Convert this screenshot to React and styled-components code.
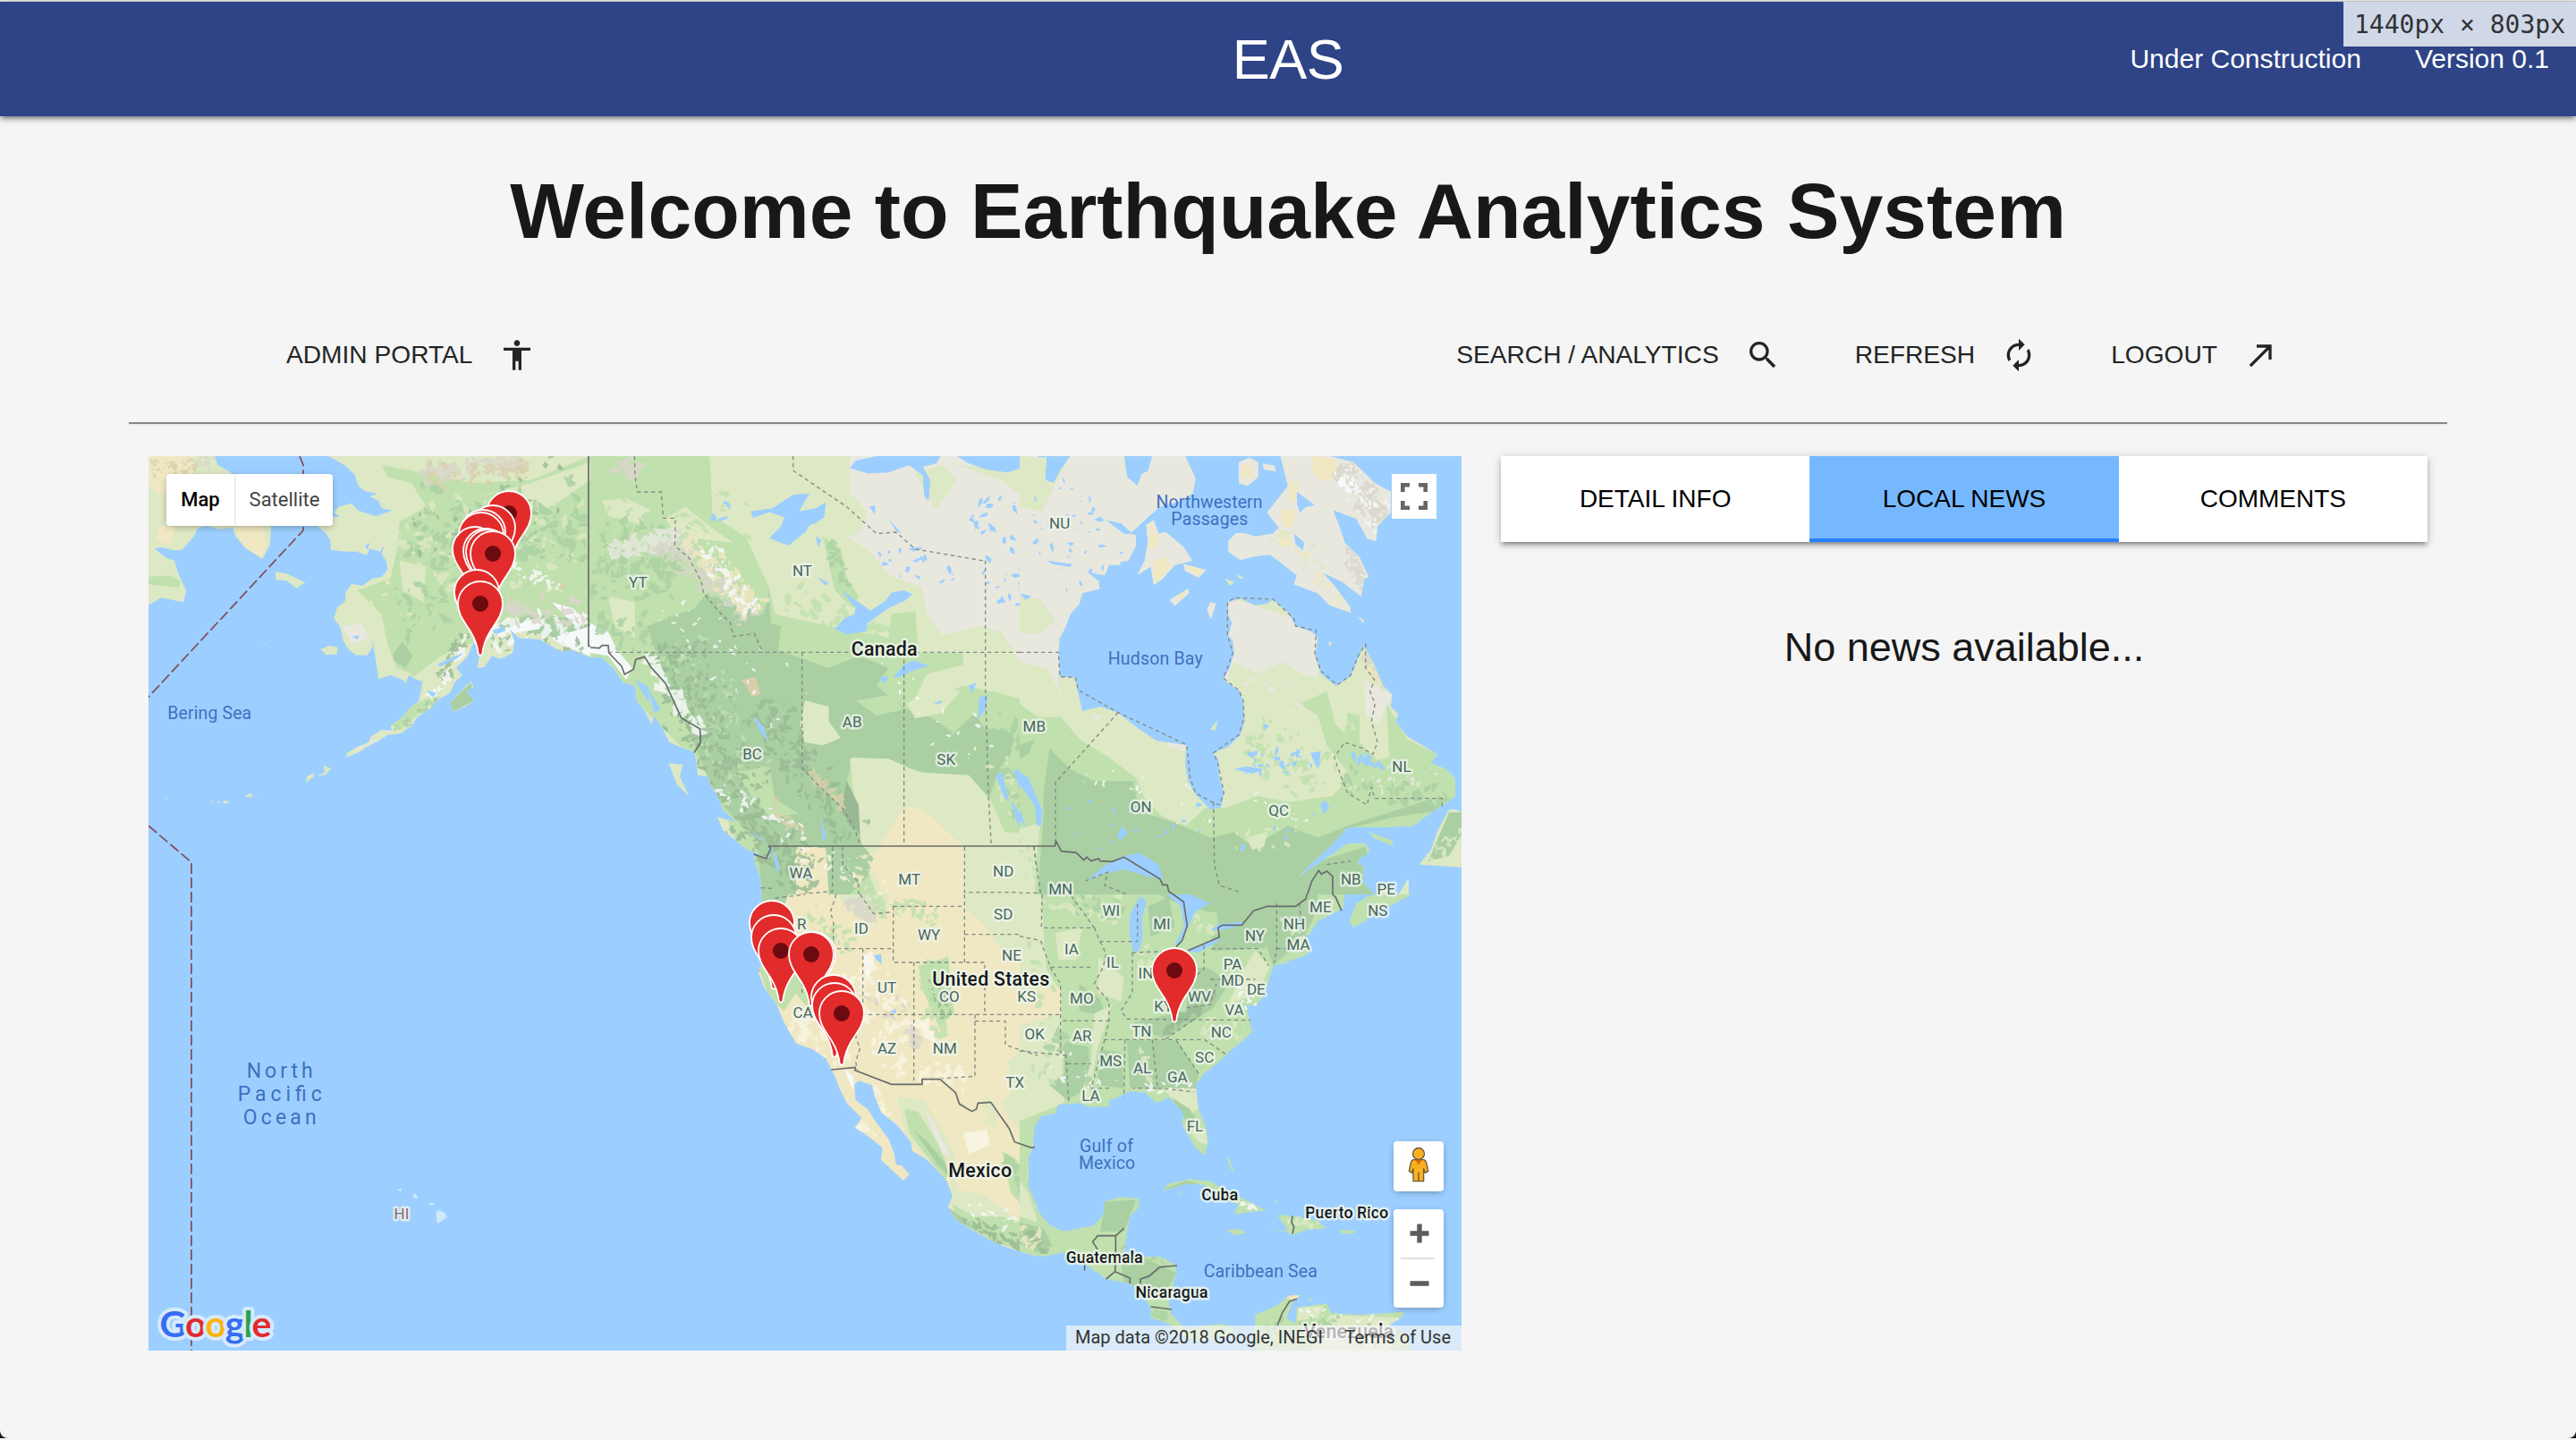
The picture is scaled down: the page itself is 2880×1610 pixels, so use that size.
import React from "react";
import styled, { createGlobalStyle } from "styled-components";
import { MdAccessibility, MdSearch, MdAutorenew, MdCallMade } from "react-icons/md";

const GlobalStyle = createGlobalStyle`
  html, body { margin: 0; padding: 0; background: #f5f5f5; }
  body { font-family: "Liberation Sans", Helvetica, Arial, sans-serif; color: #181818; }
  * { box-sizing: border-box; }
`;

const elevation = `
  box-shadow: 0 2px 10px rgba(0,0,0,.2), 0 4px 4px rgba(0,0,0,.2), 0 6px 2px -4px rgba(0,0,0,.14);
`;

const Page = styled.div`
  position: relative;
  width: 2880px;
  height: 1608px;
  overflow: hidden;
  background: #f5f5f5;
`;
const WindowEdge = styled.div`
  height: 2px;
  background: #efefef;
  border-bottom: 1px solid #cbcbcb;
`;
const Corner = styled.i`
  position: absolute;
  bottom: 0;
  ${(p) => p.$side}: 0;
  width: 9px;
  height: 9px;
  background: radial-gradient(circle at ${(p) => (p.$side === "left" ? "100%" : "0")} 0, transparent 8.5px, #1c1c22 9.5px);
`;
const Header = styled.header`
  position: relative;
  z-index: 1;
  display: grid;
  grid-template-columns: 1fr auto 1fr;
  align-items: center;
  height: 128px;
  padding: 0 30px 0 30px;
  background: #2e4486;
  color: #fff;
  ${elevation}
`;
const Brand = styled.div`
  grid-column: 2;
  font-size: 63px;
  line-height: 80px;
  letter-spacing: -0.5px;
`;
const Meta = styled.div`
  display: flex;
  justify-content: flex-end;
  gap: 60px;
  font-size: 30px;
  line-height: 36px;
`;
const SizeBadge = styled.div`
  position: absolute;
  z-index: 2;
  top: 2px;
  right: 0;
  width: 260px;
  height: 50px;
  padding-left: 12px;
  background: #d0d7e6;
  color: #303236;
  font: 28px/52px "DejaVu Sans Mono", monospace;
  white-space: pre;
`;
const Title = styled.h1`
  margin: 56px 0 0;
  text-align: center;
  font-size: 87.7px;
  line-height: 100px;
  font-weight: 700;
`;
const Nav = styled.nav`
  display: flex;
  justify-content: space-between;
  margin-top: 91px;
  padding: 0 332px 0 320px;
`;
const NavGroup = styled.div`
  display: flex;
  gap: 83px;
`;
const NavLink = styled.a`
  display: flex;
  align-items: center;
  gap: 29px;
  height: 40px;
  font-size: 28.15px;
  color: #232525;
  svg { width: 40px; height: 40px; }
`;
const Rule = styled.hr`
  height: 4px;
  margin: 55px 144px 34px;
  border: 0;
  border-top: 2px solid #888;
  background: #ececec;
`;
const Content = styled.main`
  display: flex;
  gap: 44px;
  padding: 0 166px;
`;
const MapBox = styled.section`
  position: relative;
  width: 1468px;
  height: 1000px;
  overflow: hidden;
  background: #9ccfff;
  font-family: Roboto, sans-serif;
`;
const MapArt = styled.svg`
  display: block;
  width: 1468px;
  height: 1000px;
`;
const PinMark = styled.svg`
  position: absolute;
  left: ${(p) => p.$x - 166 - 30}px;
  top: ${(p) => p.$y - 510 - 30}px;
  width: 60px;
  height: 92px;
`;
const TypeSwitch = styled.div`
  position: absolute;
  top: 20px;
  left: 20px;
  display: flex;
  height: 58px;
  border-radius: 4px;
  background: #fff;
  box-shadow: 0 2px 8px -2px rgba(0,0,0,.4);
`;
const TypeOption = styled.div`
  width: ${(p) => p.$w}px;
  text-align: center;
  font-size: 22px;
  line-height: 57px;
  font-weight: ${(p) => (p.$on ? 500 : 400)};
  color: ${(p) => (p.$on ? "#000" : "#444")};
  & + & { border-left: 2px solid #ececec; }
`;
const MapButton = styled.div`
  position: absolute;
  right: ${(p) => p.$right}px;
  top: ${(p) => p.$top}px;
  width: ${(p) => p.$w}px;
  height: ${(p) => p.$h}px;
  border-radius: ${(p) => p.$r}px;
  background: #fff;
  box-shadow: ${(p) => (p.$r ? "0 2px 8px -2px rgba(0,0,0,.4)" : "none")};
  svg { display: block; }
`;
const Credits = styled.div`
  position: absolute;
  right: 0;
  bottom: 0;
  display: flex;
  justify-content: space-between;
  width: 442px;
  height: 28px;
  padding: 0 12px 0 10px;
  background: rgba(245,245,245,.7);
  font-size: 20px;
  line-height: 27px;
  color: #333;
  white-space: nowrap;
`;
const Side = styled.aside`
  width: 1036px;
`;
const Tabs = styled.div`
  display: grid;
  grid-template-columns: repeat(3, 1fr);
  height: 96px;
  background: #fff;
  ${elevation}
`;
const Tab = styled.div`
  text-align: center;
  font-size: 28px;
  line-height: 96px;
  color: #000;
  background: ${(p) => (p.$active ? "#76b8ff" : "#fff")};
  box-shadow: ${(p) => (p.$active ? "inset 0 -4px #2680ff" : "none")};
`;
const Empty = styled.p`
  margin: 88px 0 0;
  text-align: center;
  font-size: 45px;
  line-height: 60px;
`;

const C = {
  tundra: "#e8e8df", light: "#dde8c4", green: "#c0e0ae", dark: "#a9cfa3", deep: "#98b994",
  sand: "#efe8c2", cream: "#f8f4e2", snow: "#f6f9fa", rock: "#d9d6ca", tan: "#d8cfaa", water: "#9ccfff",
};

/* Seeded generator, so that the relief is the same on each render. */
function rng(seed) {
  let s = seed * 7919 + 13;
  return () => {
    s = (s * 1664525 + 1013904223) % 4294967296;
    return s / 4294967296;
  };
}
/* Irregular flecks scattered along a band between two points. */
function flecks([x1, y1, x2, y2, width, count, size], seed) {
  const r = rng(seed);
  const len = Math.hypot(x2 - x1, y2 - y1) || 1;
  const nx = -(y2 - y1) / len;
  const ny = (x2 - x1) / len;
  let d = "";
  for (let i = 0; i < count; i++) {
    const t = r();
    const o = (r() + r() - 1) * width;
    const cx = x1 + (x2 - x1) * t + nx * o;
    const cy = y1 + (y2 - y1) * t + ny * o;
    const s = size * (0.4 + r());
    const tilt = r() * 3.14;
    const n = 4 + Math.floor(r() * 3);
    for (let k = 0; k < n; k++) {
      const a = (k / n) * 6.283 + r() * 0.7;
      const q = s * (0.45 + r() * 0.8);
      const px = Math.cos(a) * q;
      const py = Math.sin(a) * q * 0.5;
      const X = cx + px * Math.cos(tilt) - py * Math.sin(tilt);
      const Y = cy + px * Math.sin(tilt) + py * Math.cos(tilt);
      d += (k ? "L" : "M") + X.toFixed(0) + " " + Y.toFixed(0);
    }
    d += "Z";
  }
  return d;
}

const TILES = [
  {
    id: "nw", x: 160, y: 500, h: 1500, base: C.light,
    land: [
      "620,30 660,50 685,68 710,92 722,130 745,148 785,155 760,165 790,180 800,205 835,212 780,232 750,222 720,212 700,188 655,200 640,218 660,232 630,236 570,252 610,285 628,310 630,345 680,350 715,350 750,362 760,340 795,350 808,330 800,360 815,380 820,410 800,435 770,440 735,465 700,458 680,485 678,515 650,540 640,575 660,600 672,650 690,680 712,697 750,698 770,670 768,640 778,700 790,778 830,765 870,780 882,792 890,765 920,780 938,785 925,850 890,880 870,905 830,935 835,950 800,948 765,970 755,990 720,1005 685,1025 680,1040 720,1025 760,1000 790,985 820,965 865,960 900,935 920,905 965,875 990,845 1030,825 1045,790 1070,765 1050,740 1090,700 1110,650 1130,690 1120,740 1145,738 1170,700 1200,710 1240,690 1245,650 1230,610 1260,640 1330,645 1400,685 1440,680 1500,705 1500,30",
      "18,30 240,30 250,60 295,85 300,264 430,264 425,330 400,375 345,340 310,300 300,270 255,275 215,264 185,270 170,300 130,345 100,345 60,335 38,340 75,370 105,380 120,430 145,480 135,520 60,505 18,530",
      "443,418 485,425 510,438 545,455 530,462 515,473 480,447 445,445",
      "595,678 625,665 653,672 650,695 615,697", "1030,855 1060,825 1085,800 1100,785 1108,805 1085,820 1110,850 1080,870 1040,888",
      "545,1125 550,1103 575,1092 570,1107", "583,1103 610,1090 605,1067 630,1078 612,1098", "340,1173 357,1161 368,1164 362,1172 390,1174", "228,1184 237,1190 230,1194", "248,1192 260,1186 258,1193", "268,1184 288,1188 285,1194 270,1194", "74,1180 80,1174 80,1182", "128,1205 140,1214", "402,652 412,662 406,660", "820,990 826,996", "840,1000 846,998",
    ],
    areas: [
      [C.sand, "18,30 170,30 165,100 60,160 18,130"], [C.sand, "300,264 400,264 415,320 400,370 340,335"], [C.sand, "60,264 110,264 90,330 40,310"],
      [C.green, "18,435 90,430 125,450 120,470 60,465 18,460"],
      [C.green, "1500,30 1500,640 1180,600 1120,650 1040,680 1000,700 960,760 930,830 900,760 850,740 820,660 800,560 720,480 830,440 850,350 860,250 950,200 900,120 820,100 800,60 960,90 1100,120 1300,110"],
      [C.green, "870,880 960,840 1000,835 930,890 860,950 830,930"], [C.dark, "840,690 870,655 905,700 880,740 840,715"], [C.dark, "1180,600 1400,640 1500,690 1500,580 1300,560"], [C.dark, "1030,855 1100,790 1110,850 1040,888"],
      [C.light, "1080,180 1180,150 1300,230 1400,180 1500,110 1500,50 1300,120"], [C.light, "860,380 950,400 940,520 870,480"], [C.light, "870,800 920,760 1000,700 990,740 930,820"],
      [C.tundra, "670,600 730,590 760,640 700,660"], [C.snow, "1240,600 1330,570 1330,610 1230,625"], [C.snow, "1370,640 1500,600 1500,700 1400,660"], [C.snow, "1370,520 1440,540 1500,590 1450,600"],
    ],
    bands: [
      [C.rock, 940, 90, 1290, 50, 40, 80, 22], [C.tan, 940, 100, 1290, 70, 50, 50, 16], [C.deep, 1120, 650, 1480, 660, 40, 40, 14], [C.dark, 880, 300, 1480, 240, 170, 120, 22], [C.light, 850, 350, 1480, 320, 200, 110, 20],
      [C.snow, 1150, 620, 1480, 590, 60, 60, 20], [C.rock, 1200, 540, 1480, 560, 60, 50, 18], [C.dark, 860, 560, 1080, 480, 100, 45, 18], [C.deep, 900, 300, 1480, 160, 200, 30, 13], [C.deep, 1000, 780, 1080, 620, 30, 30, 15],
      [C.sand, 640, 270, 860, 600, 60, 20, 12], [C.snow, 960, 870, 1100, 620, 30, 30, 14], [C.tundra, 700, 1015, 860, 950, 16, 14, 14], [C.tan, 18, 60, 200, 60, 40, 40, 12], [C.rock, 130, 40, 230, 60, 30, 20, 12],
      [C.snow, 1240, 400, 1400, 470, 22, 22, 16], [C.rock, 1240, 520, 1240, 560, 20, 14, 20], [C.tan, 1380, 440, 1400, 480, 20, 8, 10], [C.dark, 1240, 350, 1350, 360, 25, 12, 24], [C.dark, 840, 950, 1000, 840, 18, 18, 13],
    ],
    lakes: ["985,730 1020,712 1075,690 1050,710 1000,735", "950,815 985,825 970,838", "1170,615 1210,600 1215,615 1185,628", "700,635 725,630 720,645", "745,330 760,320 752,345"],
  },
  {
    id: "n", x: 660, y: 500, h: 1500, base: C.light,
    land: [
      "0,30 1500,30 1500,1500 575,1500 570,1440 552,1395 550,1370 600,1378 606,1342 560,1310 500,1268 445,1215 425,1165 400,1130 395,1105 360,1100 355,1050 345,1020 300,1005 265,990 235,930 215,900 205,930 180,880 155,850 150,800 110,790 80,745 40,705 0,705",
      "263,1060 310,1065 300,1105 332,1172 290,1130", "425,1240 490,1258 540,1300 598,1335 595,1380 520,1345 445,1285",
    ],
    areas: [
      [C.green, "0,30 400,30 410,230 520,300 600,470 620,560 800,600 1000,640 1010,560 1090,550 1100,690 1250,690 1250,730 1130,760 1080,860 1250,800 1350,820 1500,860 1500,1300 1390,1290 1340,1180 1000,1050 880,1040 900,1330 960,1500 560,1500 400,1100 0,700"],
      [C.green, "780,300 840,340 860,440 900,500 880,540 820,480"],
      [C.light, "40,180 120,170 200,210 170,260 60,230"], [C.light, "250,240 320,200 420,280 480,320 300,300"], [C.light, "60,500 150,520 150,640 80,600"],
      [C.dark, "350,540 390,490 580,560 600,485 605,590 640,600 630,680 800,740 900,700 1000,740 960,800 1060,880 1150,910 1220,960 1290,890 1320,940 1420,960 1410,1030 1370,1080 1340,1170 1290,1175 1270,1110 1150,1100 1080,1080 1000,1045 880,1040 860,1120 890,1230 910,1330 950,1380 930,1440 870,1500 575,1500 560,1320 440,1200 390,1100 350,1000 250,780 190,600"],
      [C.green, "490,1090 600,1070 620,1180 700,1230 600,1240 540,1170"], [C.light, "720,850 800,870 800,920 840,975 780,1000 720,990 700,950"], [C.light, "1060,860 1180,790 1240,820 1180,890 1090,910"], [C.green, "890,850 1010,830 1050,880 960,900"],
      [C.light, "870,1045 1000,1045 1100,1090 1270,1100 1340,1180 1350,1340 920,1340 890,1220"],
      [C.sand, "970,1338 1050,1205 1120,1215 1220,1310 1255,1338 1255,1500 980,1500 940,1400"], [C.sand, "690,1340 790,1345 800,1500 690,1500"], [C.light, "1255,1340 1500,1340 1500,1500 1255,1500"],
      [C.tundra, "600,30 870,30 870,150 930,220 900,290 860,300 940,350 1000,430 1110,470 1130,560 1180,630 1300,600 1380,620 1440,720 1500,735 1500,30"],
      [C.light, "700,60 800,100 860,170 760,180 690,90"], [C.light, "1090,90 1180,60 1230,110 1160,210"], [C.light, "1230,60 1500,80 1480,190 1380,110"], [C.snow, "0,590 60,620 90,680 140,740 120,780 60,700 0,690"],
      [C.deep, "860,1120 900,1200 905,1300 840,1220"], [C.tan, "510,780 555,770 572,830 540,835"],
    ],
    bands: [
      [C.dark, 30, 350, 300, 420, 160, 150, 18], [C.dark, 20, 620, 330, 620, 80, 60, 18], [C.tundra, 60, 340, 300, 310, 45, 70, 22], [C.rock, 250, 300, 540, 570, 70, 130, 22], [C.sand, 330, 300, 560, 560, 60, 90, 20], [C.snow, 380, 330, 540, 560, 50, 50, 15],
      [C.deep, 260, 660, 500, 1180, 130, 240, 15], [C.deep, 560, 850, 880, 1300, 90, 150, 16], [C.deep, 480, 1230, 760, 1460, 100, 130, 17], [C.green, 280, 650, 560, 1160, 130, 80, 15], [C.snow, 180, 700, 370, 960, 26, 50, 22],
      [C.snow, 430, 1120, 740, 1330, 50, 30, 16], [C.tan, 600, 1180, 720, 1300, 40, 18, 16], [C.snow, 240, 530, 680, 880, 120, 34, 10], [C.tan, 740, 1090, 860, 1210, 20, 24, 20], [C.rock, 90, 50, 160, 90, 40, 30, 20], [C.snow, 900, 730, 1350, 1050, 120, 22, 10],
      [C.green, 660, 500, 1000, 640, 70, 40, 24], [C.green, 50, 230, 540, 230, 100, 40, 18], [C.water, 1320, 180, 1480, 600, 110, 40, 14], [C.water, 960, 340, 1240, 440, 70, 18, 13], [C.dark, 800, 320, 860, 480, 30, 20, 18], [C.sand, 940, 1360, 930, 1480, 50, 22, 14],
      [C.dark, 1340, 900, 1500, 1250, 90, 40, 26], [C.light, 1350, 1000, 1490, 1300, 60, 20, 16], [C.cream, 700, 1350, 1010, 1480, 60, 30, 13], [C.water, 500, 100, 420, 250, 20, 6, 14],
    ],
    lakes: [
      "538,215 610,205 680,160 735,155 700,215 755,205 790,185 785,235 755,255 735,262 720,285 665,330 600,305 640,265 650,235 600,218 545,237",
      "820,610 850,575 885,560 890,540 840,478 900,520 940,548 990,515 1010,488 1050,480 1080,492 1060,512 1000,540 930,590 925,618 860,628", "1015,775 1050,730 1085,715 1135,733 1080,750 1040,770",
      "870,70 890,45 960,30 1175,30 1160,55 1115,65 1140,110 1135,180 1120,165 1115,95 1070,60 1000,85 930,88", "1230,30 1450,30 1445,70 1400,85 1330,75 1270,55", "1420,1085 1450,1078 1490,1180 1500,1215 1440,1150", "1410,1190 1430,1210 1462,1275 1435,1270", "1360,1100 1380,1090 1405,1190 1385,1170",
      "1305,840 1335,830 1325,880 1300,915", "1268,800 1295,790 1280,825", "545,900 580,935 600,990 570,955", "150,780 190,800 200,860 180,830", "190,800 235,880 215,890", "755,300 775,310 765,335", "540,1285 580,1320 610,1340 560,1310", "610,1340 635,1400 625,1430", "760,435 800,455 790,465", "935,200 955,195 955,225", "1000,240 1045,290 1025,280", "970,770 1000,770 985,795", "1150,860 1180,848 1175,860", "775,1240 790,1310 778,1320", "820,430 850,490 840,470",
    ],
  },
  {
    id: "ne", x: 1140, y: 500, h: 1500, base: C.light,
    land: [
      "0,30 90,35 85,110 115,120 135,80 170,30 350,30 360,100 395,130 410,90 430,80 445,30 555,30 590,105 580,155 540,180 470,200 430,235 370,290 390,295 390,330 365,380 330,395 300,395 285,430 225,418 265,450 268,475 210,490 200,525 170,560 155,600 135,640 130,690 135,770 185,772 195,820 210,885 270,870 330,890 400,945 460,985 560,1000 555,1060 565,1120 590,1165 640,1215 675,1210 685,1160 668,1100 668,1050 650,1025 700,1005 740,965 755,920 750,860 740,820 683,780 705,740 720,690 715,650 700,630 712,590 700,560 700,520 740,508 790,530 830,525 850,512 900,555 925,600 980,620 1000,640 990,700 1010,760 1060,800 1110,770 1130,720 1155,665 1190,730 1220,800 1250,830 1245,870 1270,895 1260,920 1300,970 1400,1030 1380,1060 1430,1080 1460,1110 1462,1170 1420,1200 1380,1225 1320,1270 1220,1275 1100,1275 1050,1330 980,1395 930,1445 1000,1398 1100,1330 1160,1330 1175,1355 1130,1390 1155,1410 1150,1460 1190,1500 0,1500",
      "1482,1225 1465,1215 1440,1215 1400,1290 1380,1350 1340,1400 1420,1405 1482,1410", "1170,1290 1250,1320 1250,1335 1190,1312", "425,260 450,245 465,290 490,285 550,335 578,380 520,395 480,440 450,462 440,400 395,428 420,380 430,320", "550,392 625,412 600,437 555,415", "503,512 565,475 568,490 520,532", "628,545 640,520 658,525 642,577", "688,440 720,452 705,465", "725,425 750,437 740,443", "1135,570 1155,580 1153,592", "1035,655 1048,652 1040,670",
      "875,30 890,90 900,130 830,220 870,270 850,290 790,300 760,290 725,288 700,315 700,350 740,378 790,365 840,360 880,390 930,430 920,460 1000,490 1040,530 1110,555 1108,535 1060,470 1015,420 1080,450 1145,500 1155,440 1170,435 1140,370 1090,320 1070,260 1050,210 1130,240 1165,305 1195,315 1200,265 1245,220 1245,150 1190,120 1120,50 1040,30", "735,50 770,35 800,50 800,100 765,130 735,120", "815,55 855,62 860,80 820,75", "1200,1490 1220,1470 1270,1500 1200,1500", "1270,1500 1305,1445 1305,1500", "640,945 665,915 655,950",
    ],
    areas: [
      [C.tundra, "0,30 600,30 600,400 270,560 130,640 130,830 200,880 150,850 90,740 0,720"], [C.light, "0,30 170,30 120,120 75,215 0,200"], [C.light, "0,500 70,510 120,580 60,630 0,620"],
      [C.tundra, "690,500 1000,600 1000,770 940,760 880,720 800,760 720,720 690,790"], [C.tundra, "700,280 1010,120 1280,120 1200,600 700,400"], [C.tundra, "600,30 1300,30 1300,500 800,420 600,260"], [C.tundra, "400,240 660,240 660,600 400,600"],
      [C.sand, "440,250 465,300 460,340 430,340"], [C.sand, "450,380 490,370 510,400 450,460"], [C.sand, "560,395 625,412 590,430"], [C.sand, "525,500 560,480 545,515"], [C.sand, "980,30 1060,40 1070,100 1020,115 985,95"], [C.sand, "905,110 935,120 930,180 905,180"], [C.sand, "880,210 930,210 910,270 880,260"], [C.sand, "860,290 900,285 915,330 880,335"], [C.sand, "745,60 775,55 780,100 745,105"], [C.sand, "930,350 975,355 965,375"],
      [C.green, "0,860 60,905 140,905 200,980 300,1040 390,1110 420,1180 480,1240 560,1270 620,1210 690,1210 800,1170 900,1190 1050,1170 1110,1100 1030,1000 1000,900 940,860 1030,820 1060,930 1090,960 1100,890 1140,900 1140,990 1200,1050 1240,1040 1230,860 1300,980 1400,1030 1460,1110 1462,1170 1320,1275 1160,1500 0,1500"],
      [C.dark, "80,1160 100,1010 170,1080 250,1120 380,1120 400,1220 520,1260 640,1310 720,1290 780,1340 900,1270 1000,1310 1100,1270 1380,1180 1400,1220 1260,1240 1100,1280 1000,1390 1160,1340 1200,1500 60,1500 80,1240"],
      [C.dark, "0,1000 50,980 30,1030 0,1045"], [C.light, "0,1280 70,1260 60,1340 50,1500 0,1500"], [C.dark, "1482,1225 1440,1225 1370,1390 1440,1370 1482,1300"], [C.tundra, "490,985 560,1000 550,1020 500,1005"], [C.tundra, "1155,780 1250,830 1200,930 1160,900"], [C.tundra, "240,900 280,900 260,915"], [C.snow, "1062,100 1120,95 1135,140 1110,160 1070,130"], [C.light, "760,1310 830,1290 820,1340 780,1350"],
    ],
    bands: [
      [C.rock, 1080, 60, 1230, 270, 50, 110, 17], [C.snow, 1080, 60, 1230, 270, 60, 60, 12], [C.rock, 1100, 340, 1150, 470, 28, 36, 15], [C.light, 850, 260, 1080, 510, 60, 26, 15], [C.sand, 1000, 430, 1080, 520, 24, 14, 14], [C.water, 30, 180, 340, 480, 160, 34, 11], [C.water, 130, 80, 250, 300, 60, 10, 10],
      [C.tundra, 760, 780, 960, 860, 70, 20, 13], [C.green, 780, 960, 1040, 1120, 110, 60, 19], [C.water, 750, 1060, 1010, 1060, 60, 26, 14], [C.snow, 200, 1080, 660, 1260, 90, 20, 9], [C.water, 150, 1270, 1000, 1290, 90, 26, 11], [C.light, 720, 1330, 940, 1280, 60, 14, 13], [C.rock, 1160, 700, 1230, 800, 24, 44, 14], [C.sand, 1160, 730, 1210, 800, 20, 14, 12],
      [C.tundra, 1080, 1130, 1440, 1100, 60, 26, 12], [C.dark, 1080, 1110, 1440, 1180, 50, 34, 18], [C.light, 1050, 870, 1150, 960, 60, 8, 24], [C.light, 1360, 1390, 1480, 1280, 40, 18, 13], [C.snow, 760, 1150, 1000, 1270, 40, 14, 8], [C.dark, 60, 1360, 120, 1480, 40, 20, 17], [C.water, 1120, 1030, 1210, 1070, 26, 14, 16], [C.green, 0, 1320, 60, 1480, 40, 14, 13],
    ],
    lakes: [
      "225,1455 290,1400 350,1372 400,1360 465,1400 482,1450 430,1440 350,1415 280,1432", "325,1305 345,1272 362,1292 340,1318", "0,1090 30,1110 60,1180 77,1220 72,1270 58,1270 50,1200 0,1130", "0,1210 20,1270 0,1250", "565,1120 590,1108 610,1130 600,1138", "975,1025 1010,1020 1000,1080 985,1050", "1008,1195 1025,1185 1040,1210 1018,1230", "815,925 838,935 822,948", "290,245 340,255 380,292 350,290", "90,380 175,392 170,402 110,392", "930,150 990,195 960,200 940,220 930,190", "920,290 955,320 950,345 925,325", "720,1080 760,1070 820,1080 780,1095", "0,490 40,500 20,512",
    ],
  },
  {
    id: "sw", x: 160, y: 1000, h: 1560, base: "#cfe8fa",
    land: ["982,1065 992,1058 1012,1068 1020,1082 1003,1094 990,1104 984,1095", "905,1006 915,1006 923,1020 908,1019", "956,1032 977,1037 974,1044 963,1042", "852,992 867,985 865,997"],
    areas: [], bands: [], lakes: [],
  },
  {
    id: "s", x: 660, y: 1000, h: 1560, base: C.sand,
    land: ["575,0 572,100 580,230 562,255 582,310 625,370 650,430 690,500 745,520 790,550 820,610 840,660 860,700 910,750 888,782 930,810 980,850 975,890 1050,960 1070,940 1045,910 1025,905 1020,870 1000,820 955,760 930,720 890,690 885,640 900,625 945,640 955,680 975,730 1030,775 1075,830 1080,860 1130,890 1195,960 1215,1010 1200,1050 1230,1095 1290,1130 1350,1165 1400,1185 1500,1215 1500,1050 1470,980 1470,880 1485,845 1480,790 1500,760 1500,0"],
    areas: [
      [C.dark, "570,0 665,0 640,60 640,200 620,260 560,260"], [C.green, "560,230 720,250 760,380 740,400 690,330 650,390 600,350"], [C.light, "830,0 1000,0 990,60 930,90 860,50"], [C.light, "1255,0 1500,0 1500,200 1380,190 1330,110 1255,40"], [C.light, "1400,560 1450,520 1500,540 1500,860 1400,740 1380,700 1420,650"], [C.light, "1030,680 1120,690 1220,860 1230,990 1320,1010 1460,1110 1300,1130 1210,1080 1210,960 1060,820"],
      [C.green, "1055,720 1100,730 1180,860 1200,940 1190,960 1130,880 1070,800"], [C.dark, "1085,790 1130,830 1190,900 1205,950 1160,900"], [C.tundra, "1120,720 1150,760 1210,880 1180,870"], [C.green, "1215,1040 1290,1080 1380,1080 1500,1120 1500,1215 1350,1165 1230,1095"], [C.dark, "1200,1050 1270,1100 1300,1130 1230,1095"], [C.green, "1380,860 1430,890 1470,1000 1500,1040 1500,1100 1410,1000"], [C.green, "1100,240 1200,210 1220,400 1170,440 1120,330"],
      [C.snow, "915,205 945,195 950,240 925,290"], [C.cream, "1090,410 1150,450 1160,500 1120,480"], [C.snow, "850,580 880,610 885,660 865,620"], [C.cream, "1250,800 1330,790 1340,840 1270,870"],
    ],
    bands: [
      [C.cream, 880, 260, 1080, 480, 110, 50, 22], [C.cream, 1100, 580, 1280, 620, 60, 26, 20], [C.cream, 680, 420, 860, 560, 50, 30, 18], [C.green, 720, 60, 860, 200, 60, 40, 16], [C.green, 1020, 30, 1160, 80, 40, 34, 17], [C.rock, 860, 30, 960, 60, 45, 34, 22], [C.green, 1120, 240, 1200, 400, 40, 50, 20], [C.deep, 1140, 260, 1190, 420, 30, 24, 12],
      [C.green, 1120, 380, 1200, 480, 30, 20, 18], [C.rock, 1060, 430, 1100, 520, 30, 12, 20], [C.rock, 940, 300, 1050, 400, 60, 12, 16], [C.deep, 1230, 1090, 1480, 1190, 30, 44, 16], [C.snow, 1260, 1050, 1480, 1120, 50, 18, 12], [C.dark, 1390, 880, 1480, 1030, 24, 26, 22], [C.green, 940, 10, 1000, 60, 30, 20, 20], [C.cream, 940, 480, 1060, 600, 60, 22, 18], [C.light, 1330, 690, 1340, 770, 20, 8, 22], [C.cream, 900, 770, 960, 800, 20, 10, 16], [C.cream, 950, 650, 1000, 750, 16, 12, 18],
    ],
    lakes: ["950,205 975,200 978,235 960,220", "1010,395 1025,382 1025,400"],
  },
  {
    id: "se", x: 1140, y: 1000, h: 1560, base: C.green,
    land: [
      "0,0 1090,0 1085,45 1040,70 1000,90 975,130 950,150 975,180 960,205 900,225 850,240 835,290 820,340 790,375 760,370 775,440 780,460 750,490 700,530 670,560 620,600 590,640 600,720 625,780 632,830 620,875 590,850 560,800 545,770 550,730 500,680 460,700 420,665 370,660 330,680 300,690 300,710 240,715 200,700 130,705 120,735 70,745 50,780 45,830 30,880 28,980 60,1060 100,1110 150,1130 250,1110 280,1075 285,1030 340,1015 400,1020 400,1050 370,1080 360,1130 350,1210 400,1215 470,1215 520,1240 525,1270 500,1370 510,1410 560,1460 620,1445 680,1440 730,1465 700,1480 600,1500 540,1475 500,1440 440,1420 440,1385 400,1330 370,1305 290,1290 220,1240 150,1200 80,1215 0,1195",
      "1130,30 1170,5 1200,0 1315,0 1250,35 1190,60 1150,95 1120,110 1105,90", "850,235 900,218 895,232", "480,995 500,970 570,955 640,962 700,1000 760,1025 825,1060 720,1072 735,1040 690,1020 620,975 560,970", "830,1125 900,1125 880,1100 865,1075 930,1080 1000,1095 1028,1120 960,1125 915,1142 890,1128", "695,1125 730,1122 762,1135 720,1144", "1075,1125 1125,1128 1120,1138 1078,1137", "533,998 545,1003 542,1010", "695,885 702,882 718,930 712,930", "680,820 705,818", "852,1030 868,1026 860,1034", "1150,1122 1160,1130", "970,1350 985,1365 972,1362",
      "785,1530 790,1410 860,1380 905,1345 940,1345 915,1370 895,1420 925,1440 930,1385 1030,1372 1045,1405 1140,1410 1230,1405 1290,1400 1285,1415 1240,1445 1300,1480 1310,1530",
    ],
    areas: [
      [C.light, "0,0 72,0 90,250 140,330 140,520 150,700 0,760"], [C.sand, "0,320 135,310 135,400 0,440"], [C.dark, "470,0 1000,0 985,80 950,150 850,240 830,180 650,190 640,130 640,60 500,20"], [C.dark, "560,240 640,250 700,300 650,380 560,440 480,480 420,460 380,430 560,390"], [C.dark, "200,300 270,350 290,410 200,390"], [C.dark, "150,500 230,510 240,640 160,690 100,640 150,600"], [C.dark, "360,490 530,490 600,600 590,660 470,650 370,650"], [C.green, "560,50 660,60 670,130 560,180"], [C.dark, "430,40 500,10 520,110 440,140"], [C.dark, "270,520 340,530 350,650 260,640"], [C.light, "120,130 210,110 190,220 130,220"], [C.light, "265,210 350,280 340,360 260,330"], [C.light, "250,400 310,370 260,520 230,690 200,690 240,560"], [C.light, "790,190 840,240 800,330 700,370 740,270"],
      [C.dark, "0,1100 80,1120 110,1180 60,1200 0,1170"], [C.light, "0,960 30,1000 60,1100 0,1080"], [C.light, "1040,1410 1280,1420 1240,1530 980,1530"], [C.dark, "280,1080 285,1030 390,1025 350,1130 270,1130"], [C.dark, "340,1240 440,1230 525,1270 480,1360 350,1300"], [C.sand, "885,1350 940,1340 930,1365"], [C.light, "935,1385 1020,1380 1000,1420 930,1430"], [C.light, "480,650 600,650 600,720 560,740"], [C.dark, "510,680 570,720 600,770 570,780"], [C.dark, "480,990 560,960 600,970"], [C.light, "570,790 625,790 630,840 600,830"],
    ],
    bands: [
      [C.light, 20, 40, 340, 60, 80, 20, 20], [C.deep, 480, 470, 650, 330, 22, 24, 20], [C.snow, 720, 280, 780, 390, 40, 18, 10], [C.dark, 180, 30, 340, 60, 40, 26, 20], [C.light, 400, 210, 560, 240, 60, 22, 17], [C.light, 620, 440, 760, 480, 40, 20, 15], [C.snow, 100, 560, 340, 650, 60, 20, 11], [C.snow, 380, 650, 590, 640, 20, 14, 12], [C.sand, 0, 1130, 60, 1160, 40, 14, 18], [C.deep, 20, 1120, 90, 1200, 20, 14, 16],
      [C.dark, 330, 1210, 510, 1230, 30, 26, 18], [C.dark, 450, 1400, 500, 1420, 20, 12, 16], [C.dark, 800, 1440, 1280, 1480, 50, 40, 18], [C.snow, 940, 1390, 1280, 1440, 30, 20, 10], [C.light, 560, 60, 660, 130, 40, 10, 18], [C.light, 850, 60, 960, 190, 40, 14, 11], [C.snow, 740, 1030, 800, 1060, 14, 8, 12], [C.light, 900, 1090, 1000, 1110, 16, 12, 14], [C.dark, 120, 460, 220, 660, 50, 24, 22], [C.green, 60, 100, 90, 700, 60, 24, 17], [C.light, 400, 500, 440, 640, 30, 10, 15],
    ],
    lakes: ["370,70 385,40 405,5 425,25 410,80 412,150 400,190 380,192 368,120", "495,0 570,0 640,30 600,50 585,65 570,100 550,140 530,172 520,168 552,110 540,40", "555,190 615,170 665,145 670,155 600,195", "640,120 670,98 750,92 745,103 690,118", "770,345 762,290 775,320"],
  },
];

const LINES = [
  [160, 500, false, ["1494,30 1494,667 1500,667"]],
  [660, 500, true, ["148,30 150,95 157,150 238,150 245,238 285,238 285,290 283,330 330,370 372,450 380,490 430,550 470,590 480,635 550,625 578,688", "60,688 1440,688", "710,688 710,1075 760,1130 850,1215 890,1290 905,1335", "1052,688 1052,1338", "1325,380 1325,800 1335,1160 1345,1338", "680,30 680,78 860,200 960,290 1025,285 1090,342 1325,382", "812,1340 812,1490 720,1497", "845,1340 847,1400 900,1460 900,1500", "1255,1340 1255,1493 1440,1493", "1488,1340 1495,1400", "572,1478 610,1480"]],
  [660, 500, false, ["597,1338 1440,1338", "0,672 30,674 40,665 60,665 62,690 105,735 115,762 145,745 152,712 182,703 205,740 252,792 305,908 368,945 370,990 348,1025", "548,1365 590,1380 605,1345 597,1338"]],
  [1140, 500, true, ["0,688 130,688 135,770 187,772 197,815 330,890 490,965 560,998 572,1110 590,1160 645,1190 670,1200 685,1160 665,1060 650,1025 735,965 752,910 750,850 735,815 683,775 715,690 697,630 697,520 720,505 850,510 920,575 925,600 995,615 990,690 1010,750 1065,797 1110,765 1135,700 1160,662 1160,740 1190,780 1175,820 1192,860 1180,920 1200,990 1185,1030 1150,1010 1090,990 1055,1040 1080,1110 1100,1160 1165,1200 1180,1140 1190,1178 1417,1178 1417,1210", "330,890 120,1125 120,1338", "650,1190 653,1400 670,1470 740,1493", "48,1340 60,1430 70,1495 0,1495", "220,1455 295,1425 285,1470 360,1500", "1030,1400 1110,1388"]],
  [1140, 500, false, ["0,1338 118,1338 122,1322 140,1355 190,1360 215,1385 225,1375 240,1388 265,1380 270,1388 310,1390 350,1375 470,1448 480,1468 495,1468 500,1490 515,1500", "965,1500 980,1455 1003,1420 1012,1432 1030,1422 1050,1440 1050,1500"]],
  [660, 1000, true, ["1016,40 1253,40", "1255,0 1255,228", "1016,40 1016,228 1323,228 1323,403", "828,182 1016,182", "914,182 914,403 1440,403", "1085,228 1085,637", "1255,134 1440,134", "1290,403 1290,610 1180,617", "1290,425 1392,425 1392,505 1500,540", "825,0 805,60 815,90 815,182", "905,0 950,65 1005,60", "710,270 710,330", "914,403 890,480 905,515 890,560 895,590", "620,12 720,0"]],
  [660, 1000, false, ["808,588 888,580 888,590 1010,637 1113,637 1113,620 1173,620 1225,665 1238,703 1280,728 1295,720 1300,700 1343,697 1405,785 1423,830 1480,850 1490,847"]],
  [1140, 1000, true, ["75,0 73,112 250,112 170,0", "0,140 70,155 103,244 245,244", "103,244 137,300 137,530 155,540 165,700", "0,403 137,403", "145,424 300,424", "160,568 240,568", "250,112 270,158 395,158 395,20", "270,158 290,200 280,244 250,300 300,360 300,424 285,487 620,487", "378,195 378,330 340,390 360,418 775,422", "285,487 240,650 300,650", "353,487 350,680", "445,487 463,650 380,650", "463,650 585,662", "525,490 600,600", "643,182 800,182 835,240", "618,170 618,250 560,300", "640,285 790,285", "378,195 520,190", "862,30 862,182 855,230", "938,30 945,100", "0,525 155,540", "490,485 590,415", "560,380 640,370 660,300", "862,182 930,182", "620,487 690,535"]],
  [1140, 1000, false, ["515,0 550,25 562,105 545,155 525,175", "565,188 670,143 665,112 680,103 745,103 785,55 830,40 925,40 960,15 963,0", "1050,0 1060,10 1080,55", "262,1192 245,1165 262,1145 322,1145 322,1205 320,1265 370,1287 370,1305", "322,1145 350,1120", "218,1262 218,1230", "290,1290 320,1265", "405,1305 405,1290 435,1280 470,1250 528,1245", "440,1383 510,1392", "865,1445 880,1405 905,1365 930,1357", "915,1078 912,1100 920,1115 915,1138"]],
];

const STATES = {
  "660,500": [["YT", 160, 471], ["NT", 711, 432], ["AB", 878, 938], ["BC", 543, 1048], ["SK", 1193, 1065], ["WA", 706, 1446], ["MT", 1070, 1467], ["ND", 1385, 1440]],
  "1140,500": [["NU", 134, 272], ["MB", 49, 953], ["ON", 407, 1223], ["QC", 869, 1236], ["NL", 1281, 1088], ["NB", 1111, 1467], ["PE", 1229, 1500], ["MN", 137, 1500]],
  "660,1000": [["R", 709, 117], ["ID", 909, 131], ["WY", 1136, 153], ["SD", 1385, 84], ["NE", 1413, 222], ["UT", 995, 330], ["CO", 1204, 360], ["KS", 1463, 360], ["CA", 713, 414], ["AZ", 995, 534], ["NM", 1189, 534], ["TX", 1424, 648]],
  "1140,1000": [["WI", 307, 72], ["MI", 477, 117], ["ME", 1009, 60], ["NS", 1201, 72], ["NH", 921, 117], ["NY", 789, 156], ["MA", 935, 186], ["IA", 174, 202], ["IL", 312, 247], ["IN", 423, 282], ["PA", 714, 252], ["MD", 714, 306], ["DE", 793, 336], ["WV", 603, 360], ["KY", 482, 393], ["VA", 720, 405], ["MO", 208, 365], ["TN", 409, 477], ["NC", 676, 480], ["AR", 209, 491], ["OK", 50, 486], ["MS", 305, 576], ["SC", 620, 564], ["AL", 411, 600], ["GA", 529, 629], ["LA", 238, 693], ["FL", 588, 795]],
};

/* text, centre x, baseline y, drawn width, size */
const COUNTRIES = [
  ["Canada", 988.7, 733.3, 74, 21.5], ["United States", 1107.8, 1101.7, 131, 21.5], ["Mexico", 1095.7, 1315.7, 71, 21.5], ["Cuba", 1363.7, 1342.3, 41, 18], ["Puerto Rico", 1505.7, 1362.3, 93, 18],
  ["Guatemala", 1234.7, 1411.7, 86, 18], ["Nicaragua", 1310, 1451.3, 81, 18], ["Venezuela", 1507.7, 1496, 101, 21.5],
];
const WATERS = [
  ["Bering Sea", 234.2, 804, 94, 19.5], ["Northwestern", 1352, 568, 119, 19.5], ["Passages", 1352.3, 587.3, 86, 19.5], ["Hudson Bay", 1291.7, 742.7, 106, 19.5], ["Gulf of", 1237, 1288, 60, 19.5], ["Mexico", 1237.5, 1306.7, 63, 19.5], ["Caribbean Sea", 1409.3, 1427.7, 127, 19.5],
  ["North", 312.7, 1204.7, 74, 23], ["Pacific", 312.7, 1230.7, 94, 23], ["Ocean", 312.7, 1256.7, 82, 23],
];

const PINS = [
  [569, 574], [551, 590], [540, 595], [538, 598], [530.7, 614], [543, 616], [546, 617], [551, 619], [533, 662], [537, 674.7],
  [862.7, 1032.3], [865, 1048.3], [872.7, 1062.7], [908.5, 1067], [907, 1067], [932, 1115], [932.7, 1124], [941, 1132.7], [1313, 1084.7],
];

const GOOGLE = [["G", "#356ef2"], ["o", "#e22b2b"], ["o", "#fbb40d"], ["g", "#356ef2"], ["l", "#2ba14b"], ["e", "#e22b2b"]];

function Tile({ tile, seed }) {
  return (
    <svg x={tile.x} y={tile.y} width="500" height={tile.h / 3} viewBox={`0 0 1500 ${tile.h}`}>
      <clipPath id={"land-" + tile.id}>
        {tile.land.map((p, i) => <polygon key={i} points={p} />)}
      </clipPath>
      <g clipPath={`url(#land-${tile.id})`}>
        <rect width="1500" height={tile.h} fill={tile.base} />
        {tile.areas.map(([fill, p], i) => <polygon key={i} points={p} fill={fill} />)}
        {tile.bands.map(([fill, ...b], i) => <path key={i} d={flecks(b, seed * 40 + i)} fill={fill} fillOpacity={fill === C.water ? 1 : 0.82} />)}
        {tile.lakes.map((p, i) => <polygon key={i} points={p} fill={C.water} />)}
      </g>
    </svg>
  );
}

function MapDrawing() {
  return (
    <MapArt viewBox="166 510 1468 1000">
      <rect x="166" y="510" width="1468" height="1000" fill={C.water} />
      {TILES.map((t, i) => <Tile key={t.id} tile={t} seed={i + 1} />)}
      {LINES.map(([x, y, dashed, list], i) => (
        <g key={i} transform={`translate(${x} ${y}) scale(.33333)`} fill="none" strokeWidth={dashed ? 4 : 5} stroke={dashed ? "#858a85" : "#696b6b"} strokeDasharray={dashed ? "13 11" : undefined}>
          {list.map((p, k) => <polyline key={k} points={p} />)}
        </g>
      ))}
      <g fill="none" stroke="#85505f" strokeWidth="1.8" strokeDasharray="12 4">
        <polyline points="335,510 339,520 339,593 166,779.3" />
        <polyline points="166,923.3 214,964 214,1510" />
      </g>
      <g fontSize="17" fill="#47665f" textAnchor="middle" stroke="rgba(240,246,236,.75)" strokeWidth="5" strokeLinejoin="round" paintOrder="stroke">
        {Object.entries(STATES).map(([key, list]) => {
          const [ox, oy] = key.split(",").map(Number);
          return list.map(([t, x, y]) => <text key={t} x={ox + x / 3} y={oy + y / 3}>{t}</text>);
        })}
        <text x="449" y="1363" fill="#8c6377">HI</text>
      </g>
      <g fill="#15181a" fontWeight="500" stroke="rgba(240,246,236,.8)" strokeWidth="5" strokeLinejoin="round" paintOrder="stroke">
        {COUNTRIES.map(([t, x, y, w, s]) => <text key={t} x={x - w / 2} y={y} fontSize={s} textLength={w}>{t}</text>)}
      </g>
      <g fill="#4070c0">
        {WATERS.map(([t, x, y, w, s]) => <text key={t + y} x={x - w / 2} y={y} fontSize={s} textLength={w}>{t}</text>)}
      </g>
      <text x="178.5" y="1495" fontFamily="Lato, sans-serif" fontWeight="700" fontSize="41" textLength="125" stroke="#d5eafd" strokeWidth="8" strokeLinejoin="round" paintOrder="stroke">
        {GOOGLE.map(([ch, fill], i) => <tspan key={i} fill={fill}>{ch}</tspan>)}
      </text>
    </MapArt>
  );
}

function Pin({ x, y }) {
  return (
    <PinMark $x={x} $y={y} viewBox="-30 -30 60 92">
      <path d="M-25 0A25 25 0 0 1 25 0C25 13 17 21 11 31C5 41 3 48 2.3 56Q0 59.5 -2.3 56C-3 48 -5 41 -11 31C-17 21 -25 13 -25 0Z" fill="#e22b2b" stroke="#fff" strokeWidth="1.8" />
      <circle r="9" fill="#6b0a10" />
    </PinMark>
  );
}

export default function App() {
  return (
    <Page>
      <GlobalStyle />
      <WindowEdge />
      <Header>
        <Brand>EAS</Brand>
        <Meta>
          <span>Under Construction</span>
          <span>Version 0.1</span>
        </Meta>
      </Header>
      <SizeBadge>1440px × 803px</SizeBadge>
      <Title>Welcome to Earthquake Analytics System</Title>
      <Nav>
        <NavGroup>
          <NavLink>ADMIN PORTAL<MdAccessibility /></NavLink>
        </NavGroup>
        <NavGroup>
          <NavLink>SEARCH / ANALYTICS<MdSearch /></NavLink>
          <NavLink>REFRESH<MdAutorenew /></NavLink>
          <NavLink>LOGOUT<MdCallMade /></NavLink>
        </NavGroup>
      </Nav>
      <Rule />
      <Content>
        <MapBox>
          <MapDrawing />
          {PINS.map(([x, y], i) => <Pin key={i} x={x} y={y} />)}
          <TypeSwitch>
            <TypeOption $on $w={76}>Map</TypeOption>
            <TypeOption $w={110}>Satellite</TypeOption>
          </TypeSwitch>
          <MapButton $right={28} $top={20} $w={50} $h={50} $r={0}>
            <svg width="50" height="50" fill="none" stroke="#666" strokeWidth="4.6">
              <path d="M12.3 20V12.3H20M30 12.3H37.7V20M37.7 30V37.7H30M20 37.7H12.3V30" />
            </svg>
          </MapButton>
          <MapButton $right={20} $top={766} $w={56} $h={56} $r={4}>
            <svg width="56" height="56" viewBox="0 0 168 168" stroke="#6a5a3a" strokeWidth="4" fill="#fbb022" strokeLinejoin="round">
              <path d="M66 62L102 62Q108 64 110 72L116 100L106 106L101 92L101 134L66 134L66 92L62 106L52 100L58 72Q60 64 66 62Z" />
              <path d="M84 104V134" />
              <path d="M72 62H96L84 80Z" fill="#e06a12" stroke="none" />
              <circle cx="84" cy="42" r="19.5" />
            </svg>
          </MapButton>
          <MapButton $right={20} $top={842} $w={56} $h={110} $r={4}>
            <svg width="56" height="110" fill="none" stroke="#5c5c5c" strokeWidth="5.4">
              <path d="M18.5 27H39.5M29 16.5V37.5M18.5 83H39.5" />
              <path d="M8 55H46" stroke="#e0e0e0" strokeWidth="2" />
            </svg>
          </MapButton>
          <Credits>
            <span>Map data ©2018 Google, INEGI</span>
            <span>Terms of Use</span>
          </Credits>
        </MapBox>
        <Side>
          <Tabs>
            <Tab>DETAIL INFO</Tab>
            <Tab $active>LOCAL NEWS</Tab>
            <Tab>COMMENTS</Tab>
          </Tabs>
          <Empty>No news available...</Empty>
        </Side>
      </Content>
      <Corner $side="left" />
      <Corner $side="right" />
    </Page>
  );
}
